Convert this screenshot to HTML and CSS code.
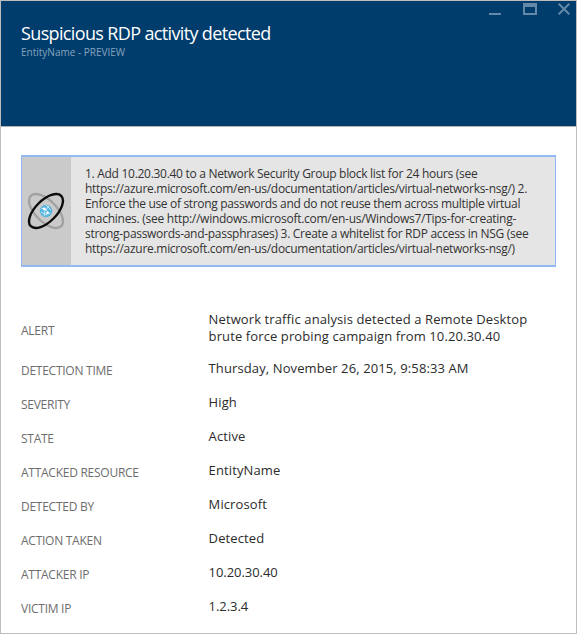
FILE: index.html
```html
<!DOCTYPE html>
<html lang="en">
<head>
<meta charset="utf-8">
<title>Suspicious RDP activity detected</title>
<link rel="stylesheet" href="styles.css">
</head>
<body>
<main class="blade">
  <header class="header">
    <div class="heading">
      <h1 class="title">Suspicious RDP activity detected</h1>
      <p class="subtitle">EntityName - PREVIEW</p>
    </div>
    <svg class="controls" width="84" height="16" viewBox="0 0 84 16" shape-rendering="crispEdges">
      <rect x="3" y="12" width="12" height="2"/>
      <path fill-rule="evenodd" d="M37 2h14v12H37zM39 6v6h10V6z"/>
      <path class="cross" shape-rendering="auto" d="M72.7 2.7l10.6 10.6M83.3 2.7L72.7 13.3"/>
    </svg>
  </header>
  <section class="notice">
    <div class="notice-icon">
      <svg width="38" height="38" viewBox="-19 -19 38 38">
        <ellipse class="orbit-back" rx="21.5" ry="10.6" transform="rotate(45)"/>
        <circle class="globe" r="6.2"/>
        <path class="globe-lines" d="M-5-3Q0-3 4 3M-2 5Q-2-1 3-5M-5 1L1 4M0-6L5-1"/>
        <circle class="globe-dot" cx="-1.7" cy="-2" r="1.4"/>
        <circle class="globe-dot" cx="1.5" cy="2" r="1.3"/>
        <ellipse class="orbit-front" rx="21.5" ry="10.6" transform="rotate(-45)"/>
      </svg>
    </div>
    <p class="notice-text">
      <span class="line">1. Add 10.20.30.40 to a Network Security Group block list for 24 hours (see</span>
      <span class="line">https://azure.microsoft.com/en-us/documentation/articles/virtual-networks-nsg/) 2.</span>
      <span class="line snug">Enforce the use of strong passwords and do not reuse them across multiple virtual</span>
      <span class="line loose">machines. (see http://windows.microsoft.com/en-us/Windows7/Tips-for-creating-</span>
      <span class="line">strong-passwords-and-passphrases) 3. Create a whitelist for RDP access in NSG (see</span>
      <span class="line">https://azure.microsoft.com/en-us/documentation/articles/virtual-networks-nsg/)</span>
    </p>
  </section>
  <dl class="details">
    <div class="row row-alert"><dt>ALERT</dt><dd>Network traffic analysis detected a Remote Desktop<br>brute force probing campaign from 10.20.30.40</dd></div>
    <div class="row"><dt>DETECTION TIME</dt><dd>Thursday, November 26, 2015, 9:58:33 AM</dd></div>
    <div class="row"><dt>SEVERITY</dt><dd>High</dd></div>
    <div class="row"><dt>STATE</dt><dd>Active</dd></div>
    <div class="row"><dt>ATTACKED RESOURCE</dt><dd>EntityName</dd></div>
    <div class="row"><dt>DETECTED BY</dt><dd>Microsoft</dd></div>
    <div class="row"><dt>ACTION TAKEN</dt><dd>Detected</dd></div>
    <div class="row"><dt>ATTACKER IP</dt><dd class="ip">10.20.30.40</dd></div>
    <div class="row"><dt>VICTIM IP</dt><dd class="ip">1.2.3.4</dd></div>
  </dl>
</main>
</body>
</html>
```
FILE: styles.css
```css
* { box-sizing: border-box; }
body {
  margin: 0;
  background: #fff;
  font-family: "Open Sans", "Noto Sans", sans-serif;
}
h1, p, dl, dd { margin: 0; }
.blade {
  width: 577px;
  height: 634px;
  border: 1px solid #bdbdbd;
  overflow: hidden;
}
.header {
  display: flex;
  justify-content: space-between;
  height: 126px;
  padding: 0 6px 0 20px;
  background: #003c6c;
  border-bottom: 1px solid #b4b4b4;
}
.heading { padding-top: 20px; }
.title {
  font-size: 18px;
  line-height: 24px;
  font-weight: 400;
  letter-spacing: -0.64px;
  color: #fff;
}
.subtitle {
  font-size: 10px;
  line-height: 14px;
  color: #86a4be;
}
.controls { fill: #6489a8; }
.cross { stroke: #6489a8; stroke-width: 2; fill: none; }
.notice {
  display: flex;
  width: 535px;
  height: 112px;
  margin: 28px 0 0 20px;
  border: 1px solid #94b8f3;
  border-width: 2px 1px;
  background: #e5e5e5;
}
.notice-icon {
  display: flex;
  align-items: center;
  justify-content: center;
  width: 49px;
  padding-right: 1px;
  background: #cacaca;
}
.orbit-back, .orbit-front { fill: none; stroke-width: 2.4; }
.orbit-back { stroke: #a1a1a1; }
.orbit-front { stroke: #0c0c0c; }
.globe { fill: #54b5df; }
.globe-lines { fill: none; stroke: #d5edf7; stroke-width: 0.9; }
.globe-dot { fill: #fff; }
.notice-text {
  padding: 9px 0 0 14px;
  font-size: 12px;
  line-height: 15px;
  letter-spacing: -0.29px;
  color: #333;
}
.line { display: block; white-space: nowrap; }
.snug { letter-spacing: -0.325px; }
.loose { letter-spacing: -0.27px; }
.details { padding: 44px 20px 0; }
.row {
  display: grid;
  grid-template-columns: 187.6px 1fr;
  align-items: center;
  margin-bottom: 17px;
}
.row-alert { margin-bottom: 15px; }
dt {
  padding-top: 5px;
  font-size: 12px;
  line-height: 12px;
  letter-spacing: -0.26px;
  color: #6d6d6d;
}
dd {
  font-size: 13px;
  line-height: 17px;
  letter-spacing: 0.11px;
  color: #2c2c2c;
}
.ip { letter-spacing: -0.06px; }
```
